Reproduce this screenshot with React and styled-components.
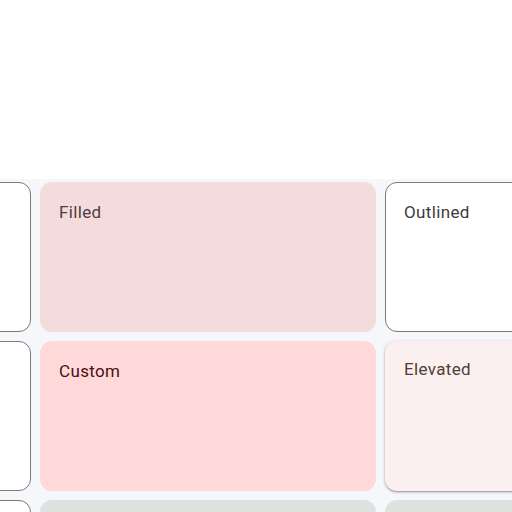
import React from "react"
import styled, { createGlobalStyle } from "styled-components"

const GlobalStyle = createGlobalStyle`
  html, body {
    margin: 0;
    padding: 0;
    background: #ffffff;
    font-family: Roboto, "Liberation Sans", sans-serif;
  }
`

const Page = styled.div`
  width: 512px;
  height: 512px;
  display: flex;
  flex-direction: column;
  overflow: hidden;
`

const Header = styled.div`
  height: 179px;
  flex-shrink: 0;
  background: #ffffff;
`

const Surface = styled.div`
  flex: 1;
  background: #f6f7fb;
  padding-top: 3px;
  overflow: hidden;
`

const Grid = styled.div`
  display: grid;
  grid-template-columns: 336px 336px 336px;
  grid-auto-rows: 150px;
  column-gap: 9px;
  row-gap: 9px;
  margin-left: -305px;
`

const variants = {
  outlined: `
    background: #ffffff;
    border: 1px solid #7a7a7a;
    color: #3d3b3b;
  `,
  filled: `
    background: #f4dcdc;
    color: #4f3d3d;
  `,
  custom: `
    background: #ffd9d9;
    color: #4a0e12;
  `,
  elevated: `
    background: #fbf0ef;
    color: #4f3d3d;
    box-shadow: 0 1px 3px rgba(0, 0, 0, 0.35), 0 1px 1px rgba(0, 0, 0, 0.12);
  `,
  muted: `
    background: #dfe1de;
    color: #3d3b3b;
  `,
}

const Card = styled.div`
  box-sizing: border-box;
  border-radius: 12px;
  padding: 18px 19px;
  font-size: 17px;
  line-height: 24px;
  letter-spacing: 0.35px;
  ${({ $variant }) => variants[$variant]}
  ${({ $variant }) => $variant === "outlined" && "padding: 17px 18px;"}
  ${({ $variant }) => $variant === "elevated" && "padding-top: 16px;"}
`

const cards = [
  { variant: "outlined", label: "" },
  { variant: "filled", label: "Filled" },
  { variant: "outlined", label: "Outlined" },
  { variant: "outlined", label: "" },
  { variant: "custom", label: "Custom" },
  { variant: "elevated", label: "Elevated" },
  { variant: "outlined", label: "" },
  { variant: "muted", label: "" },
  { variant: "muted", label: "" },
]

const App = () => (
  <>
    <GlobalStyle />
    <Page>
      <Header />
      <Surface>
        <Grid>
          {cards.map((card, i) => (
            <Card key={i} $variant={card.variant}>
              {card.label}
            </Card>
          ))}
        </Grid>
      </Surface>
    </Page>
  </>
)

export default App
